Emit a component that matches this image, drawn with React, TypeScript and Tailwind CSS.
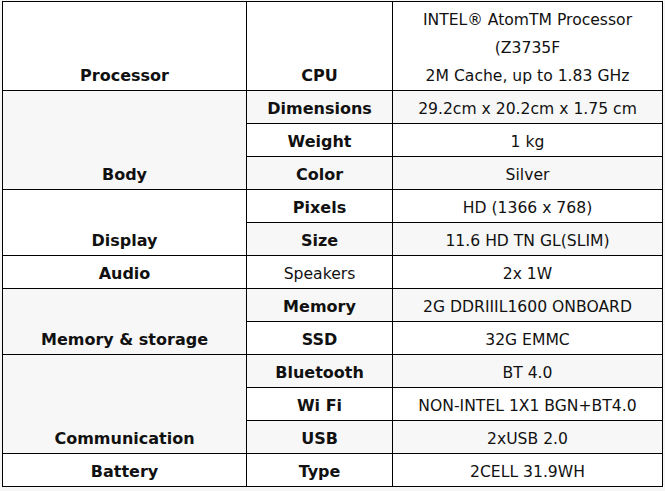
import React from "react";

type Row = {
  group?: { label: string; span: number };
  key: string;
  keyBold?: boolean;
  value: React.ReactNode;
};

const rows: Row[] = [
  {
    group: { label: "Processor", span: 1 },
    key: "CPU",
    value: (
      <>
        INTEL® AtomTM Processor
        <br />
        (Z3735F
        <br />
        2M Cache, up to 1.83 GHz
      </>
    ),
  },
  { group: { label: "Body", span: 3 }, key: "Dimensions", value: "29.2cm x 20.2cm x 1.75 cm" },
  { key: "Weight", value: "1 kg" },
  { key: "Color", value: "Silver" },
  { group: { label: "Display", span: 2 }, key: "Pixels", value: "HD (1366 x 768)" },
  { key: "Size", value: "11.6 HD TN GL(SLIM)" },
  { group: { label: "Audio", span: 1 }, key: "Speakers", keyBold: false, value: "2x 1W" },
  { group: { label: "Memory & storage", span: 2 }, key: "Memory", value: "2G DDRIIIL1600 ONBOARD" },
  { key: "SSD", value: "32G EMMC" },
  { group: { label: "Communication", span: 3 }, key: "Bluetooth", value: "BT 4.0" },
  { key: "Wi Fi", value: "NON-INTEL 1X1 BGN+BT4.0" },
  { key: "USB", value: "2xUSB 2.0" },
  { group: { label: "Battery", span: 1 }, key: "Type", value: "2CELL 31.9WH" },
];

export default function App() {
  return (
    <div
      className="w-[665px] h-[491px] bg-[#f6f6f6] pt-px pl-[2px] overflow-hidden text-[#111] text-[15.6px] leading-[28px]"
      style={{ fontFamily: '"DejaVu Sans", Verdana, sans-serif' }}
    >
      <table className="table-fixed border-collapse border border-black bg-white w-[660px]">
        <colgroup>
          <col className="w-[244px]" />
          <col className="w-[146px]" />
          <col className="w-[270px]" />
        </colgroup>
        <tbody>
          {rows.map((r, i) => (
            <tr key={r.key} className={i % 2 === 1 ? "bg-[#f7f7f7]" : "bg-white"}>
              {r.group && (
                <td
                  rowSpan={r.group.span}
                  className="border border-black align-bottom text-center font-bold text-[16px] pt-[4px] pb-0 px-1"
                >
                  {r.group.label}
                </td>
              )}
              <td
                className={`border border-black align-bottom text-center pt-[4px] pb-0 px-1 ${
                  r.keyBold === false ? "font-normal" : "font-bold text-[16px]"
                }`}
              >
                {r.key}
              </td>
              <td className="border border-black align-bottom text-center pt-[4px] pb-0 px-1">
                {r.value}
              </td>
            </tr>
          ))}
        </tbody>
      </table>
    </div>
  );
}
